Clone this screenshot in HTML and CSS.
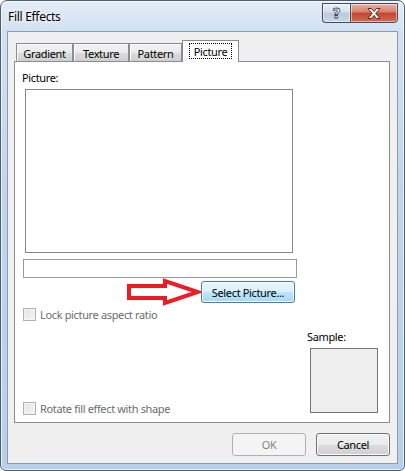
FILE: index.html
```html
<!DOCTYPE html>
<html lang="en">

<head>
  <meta charset="UTF-8">
  <title>Fill Effects</title>
  <link rel="stylesheet" href="styles.css">
</head>

<body>
  <div class="window">
    <div class="titlebar">
      <span class="title">Fill Effects</span>
      <div class="caption">
        <div class="cap-btn help">?</div>
        <div class="cap-btn close">
          <svg width="16" height="13" viewBox="0 0 16 13">
            <path d="M2 1.5h3.5L8 4.6l2.5-3.1H14L9.8 6.5 14 11.5h-3.5L8 8.4l-2.5 3.1H2l4.2-5z" fill="#fff" stroke="#5a2a24" stroke-width="1"/>
          </svg>
        </div>
      </div>
    </div>
    <div class="client">
      <div class="tabs">
        <div class="tab tab-gradient">Gradient</div>
        <div class="tab tab-texture">Texture</div>
        <div class="tab tab-pattern">Pattern</div>
        <div class="tab active"><span class="focus">Picture</span></div>
      </div>
      <div class="panel">
        <div class="label">Picture:</div>
        <div class="pic-box"></div>
        <div class="path-box"></div>
        <div class="select-row">
          <svg class="arrow" width="74" height="28" viewBox="0 0 74 28">
            <polygon points="2,8 38,8 38,3 71,14 38,25 38,20 2,20" fill="#fff" stroke="#ec1c24" stroke-width="4" stroke-linejoin="miter"/>
          </svg>
          <div class="btn hot">Select Picture...</div>
        </div>
        <div class="check disabled"><span class="box"></span>Lock picture aspect ratio</div>
        <div class="lower">
          <div class="lower-left">
            <div class="check disabled"><span class="box"></span>Rotate fill effect with shape</div>
          </div>
          <div class="sample">
            <div class="label">Sample:</div>
            <div class="sample-box"></div>
          </div>
        </div>
      </div>
      <div class="buttons">
        <div class="btn disabled">OK</div>
        <div class="btn">Cancel</div>
      </div>
    </div>
  </div>
</body>

</html>
```

FILE: styles.css
```css
body {
  margin: 0;
  background: #ffffff;
  font-family: "Noto Sans", "Open Sans", sans-serif;
  font-size: 11px;
  letter-spacing: -0.35px;
  color: #000000;
}
.window {
  box-sizing: border-box;
  width: 405px;
  height: 471px;
  border: 1px solid #4d5d73;
  border-radius: 7px 7px 6px 6px;
  background: linear-gradient(180deg, #e4edf7 0%, #d3e2f2 6%, #bfd6ee 40%, #b6d0ec 100%);
  box-shadow: inset 0 0 0 1px rgba(255, 255, 255, 0.7);
  display: flex;
  flex-direction: column;
}
.titlebar {
  height: 30px;
  display: flex;
  align-items: flex-start;
  padding: 0 6px 0 7px;
}
.title {
  margin-top: 8px;
  line-height: 16px;
  font-size: 12px;
  letter-spacing: -0.3px;
  text-shadow: 0 0 6px #ffffff, 0 0 3px #ffffff;
}
.caption {
  margin-left: auto;
  margin-top: 2px;
  display: flex;
}
.cap-btn {
  box-sizing: border-box;
  height: 20px;
  border: 1px solid #3f4d63;
  display: flex;
  align-items: center;
  justify-content: center;
  box-shadow: inset 0 0 0 1px rgba(255, 255, 255, 0.5);
}
.help {
  width: 28px;
  border-right: none;
  border-radius: 0 0 0 4px;
  background: linear-gradient(180deg, #e9eef5 0%, #d6e0ec 45%, #bccadb 50%, #c9d6e6 100%);
  color: #ffffff;
  font-family: "DejaVu Sans", sans-serif;
  font-weight: bold;
  font-size: 14px;
  letter-spacing: 0;
  -webkit-text-stroke: 0.8px #33404f;
}
.close {
  width: 48px;
  border-radius: 0 0 4px 0;
  background: linear-gradient(180deg, #eab0a2 0%, #d7806c 45%, #c2452f 50%, #d46b50 100%);
}
.client {
  flex: 1;
  margin: 0 6px 6px 6px;
  border: 1px solid #8d9aab;
  background: #f0f0f0;
  padding: 8px 7px 7px 6px;
  display: flex;
  flex-direction: column;
}
.tabs {
  height: 21px;
  padding-left: 2px;
  display: flex;
  align-items: flex-start;
}
.tab {
  box-sizing: border-box;
  margin-top: 3px;
  height: 18px;
  padding-top: 1px;
  border: 1px solid #898c95;
  border-bottom: none;
  background: linear-gradient(180deg, #f2f2f2 0%, #ebebeb 50%, #dddddd 50%, #cfcfcf 100%);
  box-shadow: inset 1px 1px 0 #fcfcfc;
  display: flex;
  align-items: center;
  justify-content: center;
}
.tab-gradient {
  width: 57px;
}
.tab-texture {
  width: 56px;
}
.tab-pattern {
  width: 53px;
}
.tab.active {
  position: relative;
  z-index: 1;
  margin-top: 0;
  height: 22px;
  width: 57px;
  padding-top: 0;
  padding-bottom: 1px;
  background: #ffffff;
  box-shadow: none;
}
.focus {
  box-sizing: border-box;
  height: 16px;
  padding: 0 4px;
  border: 1px dotted #000000;
  display: flex;
  align-items: center;
}
.panel {
  box-sizing: border-box;
  height: 362px;
  border: 1px solid #898c95;
  background: #ffffff;
  padding: 0 0 7px 8px;
  display: flex;
  flex-direction: column;
}
.label {
  line-height: 16px;
}
.panel > .label {
  margin-top: 8px;
  margin-left: -1px;
}
.pic-box {
  box-sizing: border-box;
  width: 268px;
  height: 164px;
  margin: 3px 0 0 2px;
  border: 1px solid #828790;
  background: #ffffff;
}
.path-box {
  box-sizing: border-box;
  width: 274px;
  height: 19px;
  margin-top: 6px;
  border: 1px solid #9a9a9a;
  background: #ffffff;
}
.select-row {
  height: 28px;
  display: flex;
  align-items: center;
}
.arrow {
  margin-left: 104px;
  display: block;
}
.btn {
  box-sizing: border-box;
  width: 74px;
  height: 23px;
  border: 1px solid #707070;
  border-radius: 3px;
  background: linear-gradient(180deg, #f2f2f2 0%, #ebebeb 50%, #dddddd 50%, #cfcfcf 100%);
  box-shadow: inset 0 0 0 1px #fcfcfc;
  display: flex;
  align-items: center;
  justify-content: center;
}
.btn.hot {
  width: 94px;
  height: 22px;
  border-color: #3c7fb1;
  background: linear-gradient(180deg, #eaf6fd 0%, #d9f0fc 50%, #bee6fd 50%, #a7d9f5 100%);
}
.btn.disabled {
  border-color: #adb2b5;
  background: #f4f4f4;
  box-shadow: none;
  color: #838383;
}
.check {
  height: 13px;
  display: flex;
  align-items: center;
  gap: 4px;
}
.panel > .check {
  margin-top: 2px;
}
.check.disabled {
  color: #6d6d6d;
}
.box {
  box-sizing: border-box;
  width: 13px;
  height: 13px;
  border: 1px solid #b1b1b1;
  background: linear-gradient(135deg, #e3e3e3 0%, #f6f6f6 100%);
  box-shadow: inset 0 0 0 1px #f4f4f4;
}
.lower {
  flex: 1;
  display: flex;
}
.lower-left {
  flex: 1;
  display: flex;
  flex-direction: column;
  justify-content: flex-end;
}
.sample {
  margin-right: 11px;
  padding-top: 8px;
}
.sample-box {
  box-sizing: border-box;
  width: 68px;
  height: 65px;
  margin: 3px 0 0 3px;
  border: 1px solid #767676;
  background: #efefef;
}
.buttons {
  margin-top: 10px;
  display: flex;
  justify-content: flex-end;
  gap: 10px;
}
```
